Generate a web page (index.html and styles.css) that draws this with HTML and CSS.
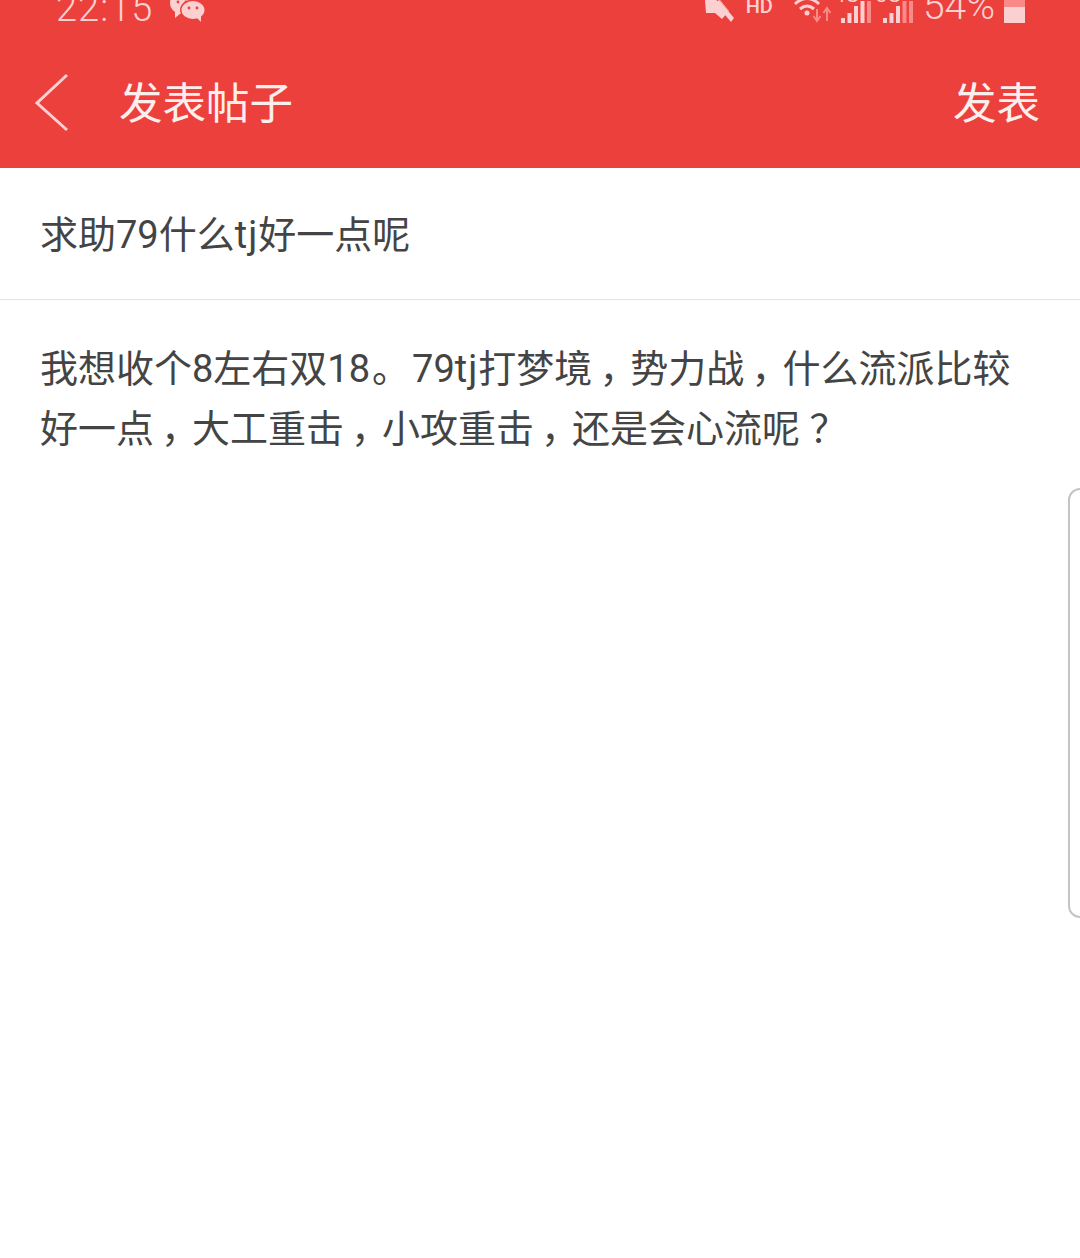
FILE: index.html
```html
<!DOCTYPE html>
<html lang="zh-CN">
  <head>
    <meta charset="UTF-8" />
    <meta name="viewport" content="width=device-width, initial-scale=1.0" />
    <title>发表帖子</title>
    <link rel="stylesheet" href="styles.css">
  </head>
  <body>
    <div class="page">
      <header class="top-bar">
        <div class="status-bar">
          <div class="status-left">
            <span class="clock">22:15</span>
            <svg class="wechat-icon" width="36" height="23" viewBox="0 0 36 23">
              <ellipse cx="12" cy="3" rx="12" ry="11" fill="#fbd0d0" />
              <path d="M5 10 L5 18 L11 13 Z" fill="#fbd0d0" />
              <circle cx="8" cy="2" r="1.400" fill="#ec403d" />
              <circle cx="16" cy="2" r="1.400" fill="#ec403d" />
              <ellipse cx="23" cy="10" rx="13" ry="10.500" fill="#ec403d" />
              <ellipse cx="23" cy="10" rx="11.500" ry="9" fill="#fbd0d0" />
              <path d="M26 17 L31 22 L31 14 Z" fill="#fbd0d0" />
              <circle cx="19" cy="8" r="1.400" fill="#ec403d" />
              <circle cx="27" cy="8" r="1.400" fill="#ec403d" />
            </svg>
          </div>
          <div class="status-right">
            <svg class="mute-icon" width="30" height="23" viewBox="0 0 30 23">
              <path d="M0 0 L15 0 L24 11 L17 19 L10 13 L1 13 Z" fill="#fbd0d0" />
              <path d="M11 -2 L28 18" fill="none" stroke="#ec403d" stroke-width="2" />
              <path d="M14 0 L29 18 L26 22 L10 3 Z" fill="#fbd0d0" />
            </svg>
            <span class="hd-label">HD</span>
            <svg class="wifi-icon" width="38" height="23" viewBox="0 0 38 23">
              <path d="M1 4 Q13 -7 25 4" fill="none" stroke="#fbd0d0" stroke-width="3" />
              <path d="M6 9 Q13 3 20 9" fill="none" stroke="#fbd0d0" stroke-width="3" />
              <circle cx="13" cy="13" r="2.500" fill="#fbd0d0" />
              <path d="M23 9 L23 20 M19.500 16 L23 21 L26.500 16" fill="none" stroke="#f98a88" stroke-width="2" />
              <path d="M33 21 L33 9 M29.500 13 L33 8 L36.500 13" fill="none" stroke="#f98a88" stroke-width="2" />
            </svg>
            <div class="signal">
              <span class="net-label">4G</span>
              <svg width="31" height="22" viewBox="0 0 31 22">
                <rect x="0" y="17" width="4" height="5" fill="#fbd0d0" />
                <rect x="6.500" y="12" width="4" height="10" fill="#fbd0d0" />
                <rect x="13" y="5" width="4" height="17" fill="#fbd0d0" />
                <rect x="19.500" y="0" width="4" height="22" fill="#fbd0d0" />
                <rect x="26" y="0" width="4" height="22" fill="#f98a88" />
              </svg>
            </div>
            <div class="signal">
              <span class="net-label">3G</span>
              <svg width="31" height="22" viewBox="0 0 31 22">
                <rect x="0" y="17" width="4" height="5" fill="#fbd0d0" />
                <rect x="6.500" y="12" width="4" height="10" fill="#fbd0d0" />
                <rect x="13" y="5" width="4" height="17" fill="#fbd0d0" />
                <rect x="19.500" y="0" width="4" height="22" fill="#f98a88" />
                <rect x="26" y="0" width="4" height="22" fill="#f98a88" />
              </svg>
            </div>
            <span class="battery-text">54%</span>
            <div class="battery">
              <div class="battery-fill"></div>
            </div>
          </div>
        </div>
        <div class="nav-bar">
          <div class="nav-left">
            <svg class="back-icon" width="36" height="60" viewBox="0 0 36 60">
              <path d="M33 2 L3 30 L33 57" fill="none" stroke="#fbd0d0" stroke-width="3" />
            </svg>
            <span class="nav-title">发表帖子</span>
          </div>
          <span class="nav-action">发表</span>
        </div>
      </header>

      <div class="subject-row">求助79什么<span class="latin">tj</span>好一点呢</div>
      <div class="post-body">我想收个8左右双18<span class="full-stop">。</span>79<span class="latin">tj</span>打梦境<span class="punct">，</span>势力战<span class="punct">，</span>什么流派比较好一点<span class="punct">，</span>大工重击<span class="punct">，</span>小攻重击<span class="punct">，</span>还是会心流呢<span class="punct">？</span></div>
    </div>
    <div class="edge-handle"></div>
  </body>
</html>
```

FILE: styles.css
```css
html,
body {
  margin: 0;
  padding: 0;
  background-color: white;
}

body {
  font-family: Roboto, "Noto Sans CJK SC", sans-serif;
  font-kerning: none;
  overflow: hidden;
}

.page {
  width: 1080px;
  height: 1258px;
  overflow: hidden;
}

/* Top bar */
.top-bar {
  height: 168px;
  background-color: #ec403d;
  display: flex;
  flex-direction: column;
}

.status-bar {
  height: 23px;
  padding: 0 55px 0 56px;
  display: flex;
  align-items: flex-end;
  justify-content: space-between;
  overflow: hidden;
  color: #fbd0d0;
}

.status-left,
.status-right {
  display: flex;
  align-items: flex-end;
}

.clock {
  font-size: 38px;
  line-height: 30px;
  font-weight: 300;
  letter-spacing: 1px;
}

.wechat-icon {
  margin-left: 17px;
}

.mute-icon {
  margin-right: 11px;
}

.hd-label {
  font-size: 20px;
  line-height: 24px;
  font-weight: 500;
  margin-right: 21px;
  position: relative;
  top: -5px;
}

.wifi-icon {
  margin-right: 9px;
}

.signal {
  position: relative;
  width: 31px;
  height: 22px;
  margin-right: 11px;
}

.signal svg {
  display: block;
}

.net-label {
  position: absolute;
  left: -7px;
  top: -16px;
  font-size: 20px;
  line-height: 20px;
}

.battery-text {
  font-size: 39px;
  line-height: 34px;
  margin-left: -2px;
  font-weight: 300;
}

.battery {
  width: 21px;
  height: 23px;
  margin-left: 9px;
  background-color: #f98a88;
  display: flex;
  align-items: flex-end;
}

.battery-fill {
  width: 100%;
  height: 16px;
  background-color: #fbd0d0;
}

/* Nav */
.nav-bar {
  flex: 1;
  padding: 14px 40px 0 34px;
  display: flex;
  align-items: center;
  justify-content: space-between;
}

.nav-left {
  display: flex;
  align-items: center;
}

.back-icon {
  display: block;
}

.nav-title {
  margin-left: 49px;
  padding-top: 4px;
  font-size: 43.5px;
  line-height: 60px;
  color: #fdeeee;
}

.nav-action {
  padding-top: 4px;
  font-size: 43.5px;
  line-height: 60px;
  color: #fdeeee;
}

/* Post form */
.subject-row {
  height: 132px;
  padding: 3px 40px 0;
  box-sizing: border-box;
  border-bottom: 1px solid #e2e2e2;
  font-size: 38px;
  line-height: 128px;
  color: #444;
}

.post-body {
  padding: 39px 40px 0;
  font-size: 38px;
  line-height: 60px;
  color: #444;
}

.latin {
  letter-spacing: 1px;
}

.full-stop {
  margin: 0 2px;
}

/* full width punctuation sits in the middle of its cell here */
.punct {
  display: inline-block;
  width: 1em;
  text-align: center;
  font-feature-settings: "palt";
}

.edge-handle {
  position: absolute;
  top: 488px;
  right: -12px;
  width: 20px;
  height: 426px;
  border: 2px solid #c4c4c4;
  border-radius: 14px;
  background-color: white;
}
```
